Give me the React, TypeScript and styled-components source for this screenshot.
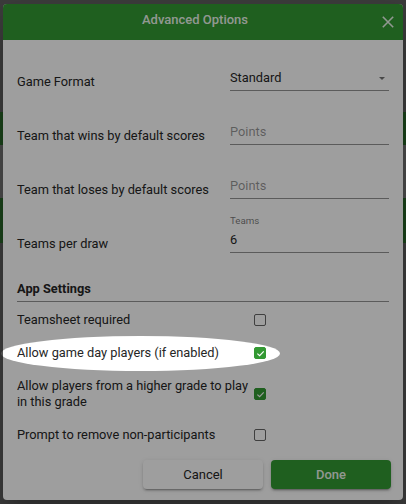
import React from "react";
import styled, { createGlobalStyle, css } from "styled-components";

const GREEN = "#339933";

const GlobalStyle = createGlobalStyle`
  html, body { margin: 0; padding: 0; }
  body {
    font-family: Roboto, "Noto Sans", "Liberation Sans", sans-serif;
    background: #5f5f5f;
    overflow: hidden;
  }
  * { box-sizing: border-box; }
`;

const Page = styled.div`
  position: relative;
  width: 406px;
  height: 504px;
  overflow: hidden;
  background: #5f5f5f;
`;

const UnderlyingApp = styled.div`
  display: flex;
  flex-direction: column;
  padding-top: 112px;
`;

const AppBar = styled.div<{ $h: number; $tone: "green" | "grey" }>`
  height: ${(p) => p.$h}px;
  background: ${(p) => (p.$tone === "green" ? "#2a682a" : "#777777")};
`;

const Dialog = styled.div`
  position: absolute;
  left: 3px;
  top: 4px;
  width: 400px;
  height: 496px;
  background: #ffffff;
  border-radius: 4px;
  overflow: hidden;
  display: flex;
  flex-direction: column;
  box-shadow: 0 11px 15px -7px rgba(0, 0, 0, 0.2), 0 24px 38px 3px rgba(0, 0, 0, 0.14);
`;

const Header = styled.div`
  position: relative;
  height: 36px;
  flex: none;
  background: ${GREEN};
  display: flex;
  align-items: center;
  justify-content: center;
`;

const Title = styled.h2`
  margin: 0 16px 4px 0;
  flex: 1;
  text-align: center;
  font-size: 13px;
  font-weight: 500;
  line-height: 18px;
  color: rgba(255, 255, 255, 0.92);
`;

const CloseButton = styled.button`
  position: absolute;
  right: 9px;
  top: 12px;
  width: 12px;
  height: 12px;
  padding: 0;
  border: 0;
  background: transparent;
  display: flex;
  color: rgba(255, 255, 255, 0.9);
`;

const Body = styled.div`
  flex: 1;
  display: flex;
  flex-direction: column;
  padding: 13px 14px 10px 14px;
  color: #262626;
  font-size: 12.8px;
`;

const Fields = styled.div`
  display: flex;
  flex-direction: column;
  gap: 16px;
`;

const FieldRow = styled.div`
  display: grid;
  grid-template-columns: 213px 1fr;
  align-items: end;
  height: 38px;
`;

const FieldLabel = styled.label`
  line-height: 19px;
`;

const FieldControl = styled.div`
  display: flex;
  flex-direction: column;
  justify-content: flex-end;
  height: 100%;
`;

const FloatingLabel = styled.span`
  font-size: 9.75px;
  line-height: 12px;
  color: rgba(0, 0, 0, 0.54);
  margin-bottom: auto;
`;

const InputLine = styled.div<{ $placeholder?: boolean }>`
  display: flex;
  align-items: center;
  justify-content: space-between;
  line-height: 16px;
  padding: 0 4px 4px 0;
  border-bottom: 1px solid rgba(0, 0, 0, 0.42);
  color: ${(p) => (p.$placeholder ? "rgba(0,0,0,0.42)" : "#262626")};
`;

const Arrow = styled.span`
  width: 0;
  height: 0;
  border-left: 3.5px solid transparent;
  border-right: 3.5px solid transparent;
  border-top: 3.5px solid rgba(0, 0, 0, 0.54);
`;

const SectionHeading = styled.h3`
  margin: 26px 0 0 0;
  font-size: 12.8px;
  font-weight: 700;
  line-height: 19px;
  padding-bottom: 3px;
  border-bottom: 1px solid rgba(0, 0, 0, 0.42);
  color: #262626;
`;

const CheckList = styled.div`
  margin-top: 2.5px;
  display: flex;
  flex-direction: column;
  gap: 2px;
`;

const CheckRow = styled.label`
  display: grid;
  grid-template-columns: 237px 12px;
  align-items: center;
  padding: 7.5px 0;
  line-height: 16px;
`;

const Box = styled.span<{ $checked?: boolean }>`
  width: 12px;
  height: 12px;
  border-radius: 2px;
  display: flex;
  align-items: center;
  justify-content: center;
  ${(p) =>
    p.$checked
      ? css`
          background: ${GREEN};
          border: 1.5px solid ${GREEN};
        `
      : css`
          background: transparent;
          border: 1.5px solid rgba(0, 0, 0, 0.6);
        `}
`;

const Actions = styled.div`
  margin-top: 9.5px;
  margin-right: -2px;
  display: flex;
  justify-content: flex-end;
  gap: 8px;
`;

const Button = styled.button<{ $primary?: boolean }>`
  width: 120px;
  height: 29px;
  border: 0;
  border-radius: 4px;
  font-family: inherit;
  font-size: 13px;
  font-weight: ${(p) => (p.$primary ? 500 : 400)};
  background: ${(p) => (p.$primary ? GREEN : "#ffffff")};
  color: ${(p) => (p.$primary ? "rgba(255,255,255,0.92)" : "#262626")};
  box-shadow: 0 3px 1px -2px rgba(0, 0, 0, 0.2), 0 2px 2px 0 rgba(0, 0, 0, 0.14),
    0 1px 5px 0 rgba(0, 0, 0, 0.12);
`;

const Spotlight = styled.div`
  position: absolute;
  left: 1px;
  top: 336px;
  width: 279px;
  height: 35px;
  border-radius: 50%;
  box-shadow: 0 0 0 1200px rgba(0, 0, 0, 0.38);
  pointer-events: none;
`;

const Checkbox: React.FC<{ checked?: boolean }> = ({ checked }) => (
  <Box $checked={checked}>
    {checked && (
      <svg width="9" height="9" viewBox="0 0 10 10">
        <path d="M1.5 5.2 L4 7.5 L8.6 2.6" fill="none" stroke="#fff" strokeWidth="1.3" />
      </svg>
    )}
  </Box>
);

const checks = [
  { label: "Teamsheet required", checked: false },
  { label: "Allow game day players (if enabled)", checked: true },
  { label: "Allow players from a higher grade to play in this grade", checked: true },
  { label: "Prompt to remove non-participants", checked: false },
];

export default function App() {
  return (
    <>
      <GlobalStyle />
      <Page>
        <UnderlyingApp>
          <AppBar $h={33} $tone="green" />
          <AppBar $h={53} $tone="grey" />
          <AppBar $h={45} $tone="green" />
        </UnderlyingApp>
        <Dialog>
          <Header>
            <Title>Advanced Options</Title>
            <CloseButton aria-label="Close">
              <svg width="12" height="12" viewBox="0 0 12 12">
                <path d="M0.8 0.8 L11.2 11.2 M11.2 0.8 L0.8 11.2" stroke="currentColor" strokeWidth="1.6" fill="none" />
              </svg>
            </CloseButton>
          </Header>
          <Body>
            <Fields>
              <FieldRow>
                <FieldLabel>Game Format</FieldLabel>
                <FieldControl>
                  <InputLine>
                    <span>Standard</span>
                    <Arrow />
                  </InputLine>
                </FieldControl>
              </FieldRow>
              <FieldRow>
                <FieldLabel>Team that wins by default scores</FieldLabel>
                <FieldControl>
                  <InputLine $placeholder>Points</InputLine>
                </FieldControl>
              </FieldRow>
              <FieldRow>
                <FieldLabel>Team that loses by default scores</FieldLabel>
                <FieldControl>
                  <InputLine $placeholder>Points</InputLine>
                </FieldControl>
              </FieldRow>
              <FieldRow>
                <FieldLabel>Teams per draw</FieldLabel>
                <FieldControl>
                  <FloatingLabel>Teams</FloatingLabel>
                  <InputLine>6</InputLine>
                </FieldControl>
              </FieldRow>
            </Fields>
            <SectionHeading>App Settings</SectionHeading>
            <CheckList>
              {checks.map((c) => (
                <CheckRow key={c.label}>
                  <span>{c.label}</span>
                  <Checkbox checked={c.checked} />
                </CheckRow>
              ))}
            </CheckList>
            <Actions>
              <Button>Cancel</Button>
              <Button $primary>Done</Button>
            </Actions>
          </Body>
        </Dialog>
        <Spotlight />
      </Page>
    </>
  );
}
